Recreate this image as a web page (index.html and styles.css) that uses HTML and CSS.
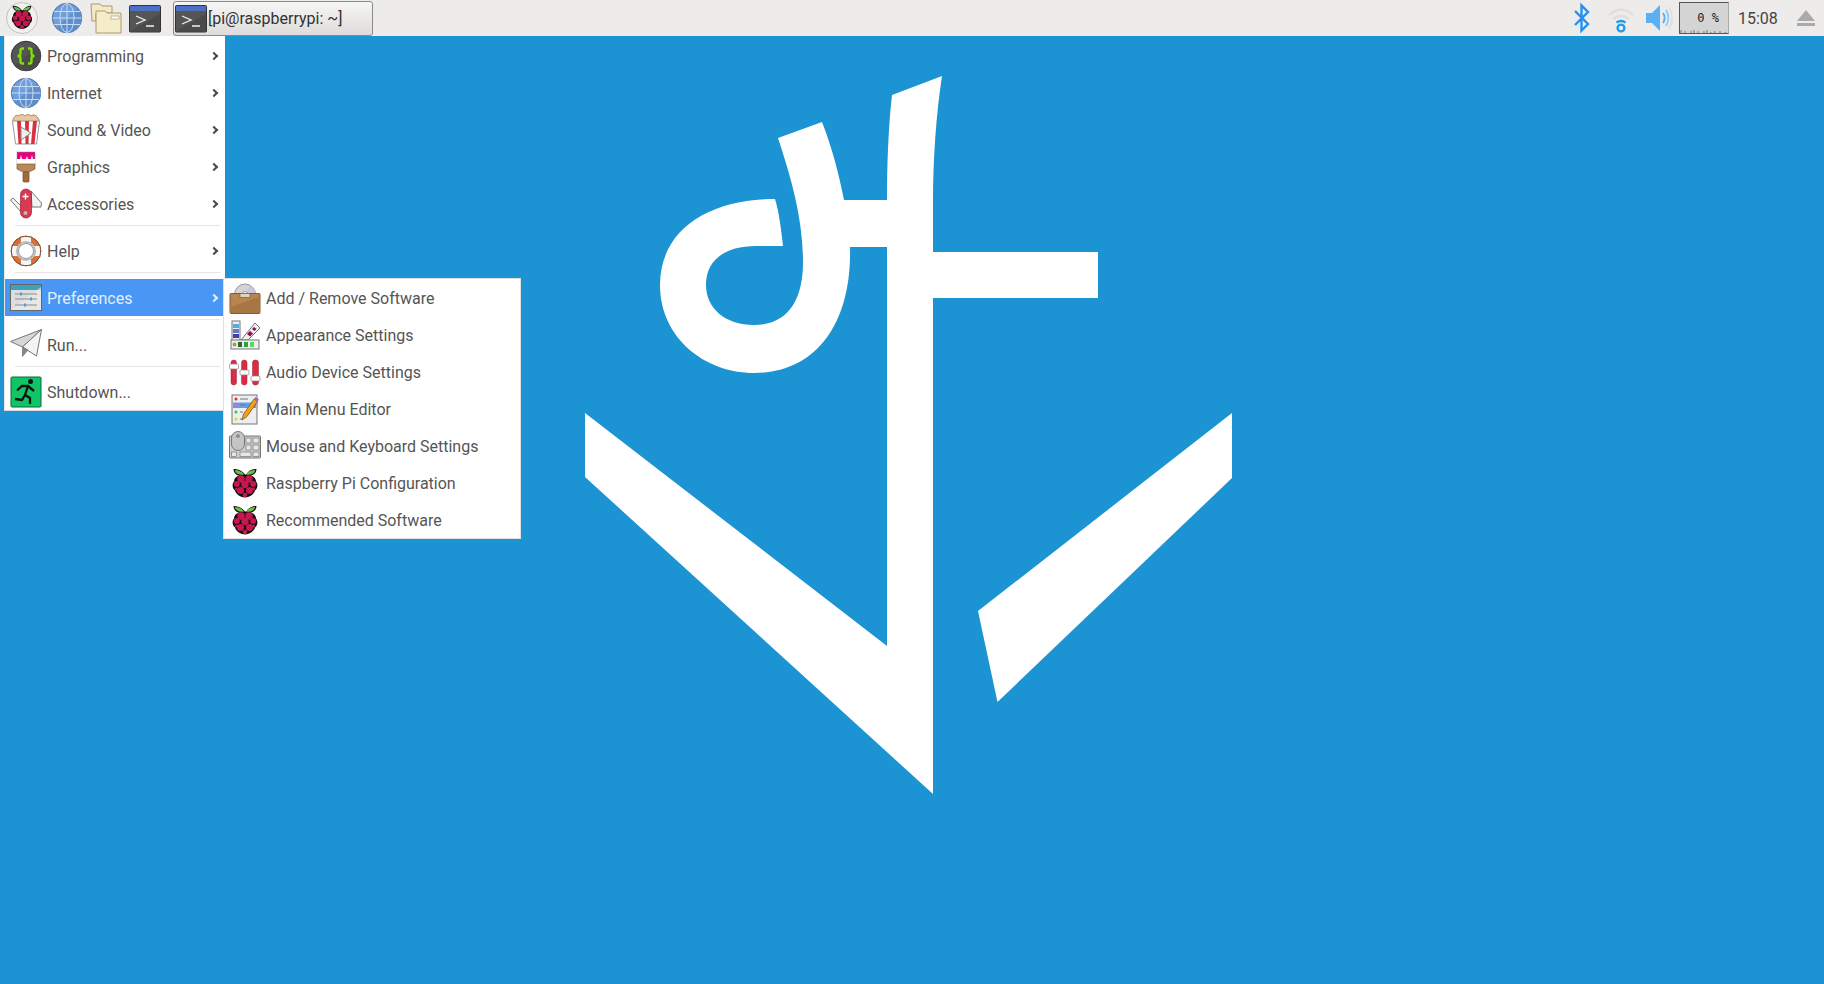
FILE: index.html
```html
<!DOCTYPE html>
<html lang="en">
    <head>
        <meta charset="UTF-8">
        <title>Raspberry Pi Desktop</title>
        <link rel="stylesheet" href="styles.css">
    </head>
    <body>

        <!-- shared icons -->
        <svg class="defs" width="0" height="0">
            <symbol id="berry" viewBox="0 0 32 32">
                <g transform="translate(0 -1.500)">
                    <path d="M16 8C13 4 9 2.500 4.500 2.500c0 3 2 6 5.500 6.500-3 1-5 3-5 6-2 2-2 7 1 9 1 4 6 7 10 7s9-3 10-7c3-2 3-7 1-9 0-3-2-5-5-6 3.500-.5 5.500-3.500 5.500-6.500-4.500 0-7.500 1.500-10.500 5.500z" fill="#111"/>
                    <path d="M15 8C13 5 9.500 3.500 5.800 3.500c.3 2.500 3 5.500 9.200 4.500zM17 8c2-3 5.500-4.500 9.200-4.500-.3 2.500-3 5.500-9.200 4.500z" fill="#6cc04a"/>
                    <g fill="#c7174d">
                        <circle cx="12" cy="12.500" r="3.700"/><circle cx="20" cy="12.500" r="3.700"/>
                        <circle cx="7.800" cy="17.500" r="3"/><circle cx="16" cy="18" r="3.700"/><circle cx="24.200" cy="17.500" r="3"/>
                        <circle cx="11.500" cy="24" r="3.500"/><circle cx="20.500" cy="24" r="3.500"/>
                        <circle cx="16" cy="28.500" r="2.300"/><circle cx="7.500" cy="22.500" r="1.500"/><circle cx="24.500" cy="22.500" r="1.500"/>
                    </g>
                </g>
            </symbol>
            <symbol id="globe" viewBox="0 0 32 32">
                <circle cx="16" cy="16" r="14.700" fill="#6f9fdc" stroke="#4f6f9c"/>
                <path d="M5 26 27 6a14.700 14.700 0 0 1-22 20z" fill="#5f8ecb"/>
                <g fill="none" stroke="#c8dcf4">
                    <ellipse cx="16" cy="16" rx="7" ry="14.500"/>
                    <path d="M16 1.500v29M3 9.500h26M1.500 16h29M3 22.500h26"/>
                </g>
            </symbol>
            <symbol id="terminal" viewBox="0 0 32 32">
                <rect x=".5" y="3.500" width="31" height="26.500" rx="1" fill="#555" stroke="#333"/>
                <rect x="1" y="4" width="30" height="5" fill="#4f6fc4"/>
                <path d="M1 29.500 31 12v17.500z" fill="#4a4a4a"/>
                <path d="m7 14 9 4-9 4M17 24h8" fill="none" stroke="#f2f2f2" stroke-width="1.300"/>
            </symbol>
        </svg>

        <!-- wallpaper -->
        <svg class="wallpaper" viewBox="0 0 1824 984">
            <path d="M942 76 892 95C888 130 887 170 887 200H844C838 170 832 148 822 122L778 138C792 180 803 220 803 262C803 300 788 325 754 325C725 325 706 308 706 285C706 260 725 246 756 246H783C781 228 779 212 775 199C710 199 660 229 660 285C660 338 705 373 754 373C815 373 852 325 850 247H887V646L585 413V477L933 794V298H1098V252H933V200C933 160 936 115 942 76Z" fill="#fff"/>
            <path d="M1232 413V478L997.500 702 978 611Z" fill="#fff"/>
        </svg>

        <!-- panel -->
        <header class="panel">
            <div class="launchers">
                <div class="start"><svg class="icon-start"><use href="#berry"/></svg></div>
                <svg class="launcher globe-launcher"><use href="#globe"/></svg>
                <svg class="launcher" viewBox="0 0 32 32">
                    <path d="M1 2h9l2 2h10v7H6v8H2z" fill="#f3e9c6" stroke="#a89a70"/>
                    <path d="M6 9h9l2 2h14v20H6z" fill="#f5ecc9" stroke="#a89a70"/>
                    <rect x="21" y="14" width="8" height="3" fill="#fff" stroke="#a89a70" stroke-width=".7"/>
                </svg>
                <svg class="launcher"><use href="#terminal"/></svg>
                <div class="task">
                    <svg class="launcher"><use href="#terminal"/></svg>
                    <span>[pi@raspberrypi: ~]</span>
                </div>
            </div>
            <div class="tray">
                <svg class="tray-icon" viewBox="0 0 28 32">
                    <path d="M6 9l13 13-6.500 6.500V3.500L19 10 6 23" fill="none" stroke="#2590f2" stroke-width="2.400"/>
                </svg>
                <svg class="tray-icon" viewBox="0 0 28 32">
                    <path d="M2 13c7-7 17-7 24 0M6 17c5-4 11-4 16 0" fill="none" stroke="#dedede" stroke-width="2.400"/>
                    <path d="M9.500 20.500c3-2 6-2 9 0" fill="none" stroke="#1e9bf0" stroke-width="2.400"/>
                    <circle cx="14" cy="26" r="3.400" fill="none" stroke="#1e9bf0" stroke-width="2.400"/>
                </svg>
                <svg class="tray-icon" viewBox="0 0 28 32">
                    <path d="M1 11h6l8-8v26l-8-8H1z" fill="#5cb0f2"/>
                    <path d="M18 11c2 3 2 7 0 10" fill="none" stroke="#5cb0f2" stroke-width="2"/>
                    <path d="M21 8c3 5 3 11 0 16" fill="none" stroke="#8cc4f0" stroke-width="1.600"/>
                    <path d="M24 5c4 7 4 15 0 22" fill="none" stroke="#dedede" stroke-width="1.600"/>
                </svg>
                <div class="cpu">
                    <span>0 %</span>
                    <svg class="cpu-graph" viewBox="0 0 48 4">
                        <path d="M1 4V1M5 4V2M11 4V2M14 4V1M18 4V2M24 4V2M27 4V1M31 4V3M35 4V2M40 4V2M45 4V3" stroke="#777"/>
                    </svg>
                </div>
                <span class="clock">15:08</span>
                <svg class="eject" viewBox="0 0 20 20">
                    <path d="M10 2 19 13H1z" fill="#aaa"/>
                    <rect x="1" y="15" width="18" height="3" fill="#aaa"/>
                </svg>
            </div>
        </header>

        <!-- main menu -->
        <nav class="menu">
            <a class="item">
                <svg class="icon" viewBox="0 0 32 32">
                    <circle cx="16" cy="16" r="14.800" fill="#555" stroke="#333"/>
                    <path d="M5 26 27 6a14.800 14.800 0 0 1-22 20z" fill="#4a4a4a"/>
                    <path d="M14 8.500h-1.500c-1.500 0-2 .5-2 2v3c0 1.500-1 2.500-3 2.500 2 0 3 1 3 2.500v3c0 1.500.5 2 2 2H14M18 8.500h1.500c1.500 0 2 .5 2 2v3c0 1.500 1 2.500 3 2.500-2 0-3 1-3 2.500v3c0 1.500-.5 2-2 2H18" fill="none" stroke="#80e000" stroke-width="2.400"/>
                </svg>
                <span>Programming</span><i class="arrow"></i>
            </a>
            <a class="item">
                <svg class="icon"><use href="#globe"/></svg>
                <span>Internet</span><i class="arrow"></i>
            </a>
            <a class="item">
                <svg class="icon" viewBox="0 0 32 32">
                    <path d="M3 6c1-4 4-6 6-4 2-2 4-2 6 0 2-2 4-2 6 0 2-2 6-1 8 4v4H3z" fill="#eac79c" stroke="#a9825a"/>
                    <path d="M2.500 7h27l-3 23h-21z" fill="#fff" stroke="#999"/>
                    <path d="M7 7h4l.5 23H8.500zM15 7h4l-.5 23h-3zM23 7h4l-2.500 23H21z" fill="#d9303e"/>
                    <path d="M11 13 21 19 11 26z" fill="#eee" stroke="#888"/>
                </svg>
                <span>Sound &amp; Video</span><i class="arrow"></i>
            </a>
            <a class="item">
                <svg class="icon" viewBox="0 0 32 32">
                    <rect x="7" y="1" width="18" height="12" fill="#e6007e" stroke="#888" stroke-width=".5"/>
                    <path d="M7 8h18v5H7zM11 4l1 4h-2zM17 5l1 3h-2zM22 4l1 4h-2z" fill="#fff"/>
                    <path d="M7 13h18v5l-6 3H13l-6-3z" fill="#b9885a" stroke="#7d5a3a" stroke-width=".7"/>
                    <rect x="13" y="21" width="6" height="10" rx="1" fill="#a06a3a" stroke="#6d4a2a" stroke-width=".7"/>
                </svg>
                <span>Graphics</span><i class="arrow"></i>
            </a>
            <a class="item">
                <svg class="icon" viewBox="0 0 32 32">
                    <path d="M.5 12 3 10 12 19 11 24zM21 3 31.500 15 31 19 22 19z" fill="#f2f2f2" stroke="#777"/>
                    <rect x="10.500" y="1" width="11" height="29" rx="5.500" fill="#d93a52" stroke="#9a2436" stroke-width=".7"/>
                    <path d="M15.500 5.500v6M12.500 8.500h6" stroke="#fff" stroke-width="1.400"/>
                    <circle cx="15.500" cy="25" r="2" fill="#bbb"/>
                </svg>
                <span>Accessories</span><i class="arrow"></i>
            </a>
            <hr>
            <a class="item">
                <svg class="icon" viewBox="0 0 32 32">
                    <circle cx="16" cy="16" r="14.800" fill="#d9703a" stroke="#8a5a3a"/>
                    <path d="M11 2h10v28H11zM2 11h28v10H2z" fill="#f6f6f6"/>
                    <circle cx="16" cy="16" r="14.800" fill="none" stroke="#8a5a3a"/>
                    <circle cx="16" cy="16" r="9" fill="none" stroke="#bbb" stroke-width="2"/>
                    <circle cx="16" cy="16" r="7.500" fill="#fff" stroke="#999"/>
                </svg>
                <span>Help</span><i class="arrow"></i>
            </a>
            <hr>
            <a class="item active">
                <svg class="icon" viewBox="0 0 32 32">
                    <rect x=".5" y="2.500" width="31" height="26" fill="#ddd" stroke="#666"/>
                    <rect x="1" y="3" width="30" height="5" fill="#3fa2bd"/>
                    <path d="M1 28 31 5v23z" fill="#eee" opacity=".6"/>
                    <path d="M5 12h22M5 17h22M5 23h22" stroke="#8a8a8a"/>
                    <path d="M10 10.500h2v3h-2zM20 15.500h2v3h-2zM14 21.500h2v3h-2z" fill="#3fa2d0"/>
                </svg>
                <span>Preferences</span><i class="arrow"></i>
            </a>
            <hr>
            <a class="item">
                <svg class="icon" viewBox="0 0 32 32">
                    <path d="M.5 12.500 31.500.5 12.500 18z" fill="#d6d6d6" stroke="#777"/>
                    <path d="M12.500 18 31.500.5 26.500 27z" fill="#f4f4f4" stroke="#777"/>
                    <path d="M12.500 18v9.500l5.500-6.500z" fill="#888" stroke="#666" stroke-width=".6"/>
                </svg>
                <span>Run...</span>
            </a>
            <hr>
            <a class="item">
                <svg class="icon" viewBox="0 0 32 32">
                    <rect x="1" y="1" width="30" height="30" rx="1" fill="#0fc566" stroke="#0c6a3c"/>
                    <circle cx="20.500" cy="5.500" r="2.500" fill="#111"/>
                    <path d="M7 14.500 12 10h6l6 5M18 10l-3 9 5 3v6M15 19l-3 5-7-1" fill="none" stroke="#111" stroke-width="2.300"/>
                </svg>
                <span>Shutdown...</span>
            </a>
        </nav>

        <!-- submenu preferences -->
        <nav class="submenu">
            <a class="item">
                <svg class="icon" viewBox="0 0 32 32">
                    <circle cx="16" cy="11.500" r="10.500" fill="#d4d4d4" stroke="#999"/>
                    <path d="M16 11.500 21 2.500a10.500 10.500 0 0 1 5 8z" fill="#c9c4e0"/>
                    <circle cx="16" cy="11.500" r="3" fill="#fff" stroke="#999"/>
                    <rect x="1" y="10.500" width="30" height="20" rx="1" fill="#b9854f" stroke="#7d5a3a"/>
                    <path d="M1 24 31 14v16H1z" fill="#a87642"/>
                    <rect x="11" y="10.500" width="10" height="4" fill="#e4d4bc" stroke="#7d5a3a" stroke-width=".7"/>
                </svg>
                <span>Add / Remove Software</span>
            </a>
            <a class="item">
                <svg class="icon" viewBox="0 0 32 32">
                    <rect x="3" y="1" width="8" height="20" fill="#eee" stroke="#777"/>
                    <path d="M4 4h6v4H4z" fill="#5ba8e0"/><path d="M4 9h6v4H4z" fill="#5a7fd0"/><path d="M4 14h6v4H4z" fill="#4a3fa0"/>
                    <path d="M12 20 26 3l5 5-12 12z" fill="#eee" stroke="#777"/>
                    <path d="M18 14l3-3 3 2.500-3 3z" fill="#8e1050"/><path d="M23 9l2-2 2.500 2-2 2z" fill="#8e1050"/>
                    <rect x="2" y="20" width="28" height="9" fill="#eee" stroke="#777"/>
                    <path d="M9 22h4v5H9z" fill="#256a2a"/><path d="M15 22h4v5h-4z" fill="#2fa03a"/><path d="M21 22h4v5h-4z" fill="#4fe05a"/>
                    <circle cx="5.500" cy="24.500" r="1.500" fill="#d89a20" stroke="#555" stroke-width=".5"/>
                </svg>
                <span>Appearance Settings</span>
            </a>
            <a class="item">
                <svg class="icon" viewBox="0 0 32 32">
                    <g fill="#d92c46" stroke="#a02034" stroke-width=".5">
                        <rect x="2" y="3" width="5.500" height="25" rx="2.700"/>
                        <rect x="12.500" y="3" width="5.500" height="25" rx="2.700"/>
                        <rect x="23.500" y="3" width="6" height="25" rx="2.700"/>
                    </g>
                    <g fill="#fff" stroke="#888" stroke-width=".7">
                        <rect x=".5" y="7" width="9" height="5" rx="1"/>
                        <rect x="11" y="13" width="9" height="5" rx="1"/>
                        <rect x="22" y="19" width="9" height="5" rx="1"/>
                    </g>
                </svg>
                <span>Audio Device Settings</span>
            </a>
            <a class="item">
                <svg class="icon" viewBox="0 0 32 32">
                    <rect x="3" y="1" width="25" height="29" fill="#eee" stroke="#777"/>
                    <rect x="4" y="8.500" width="23" height="5.500" fill="#5aa2ef"/>
                    <circle cx="7" cy="5" r="1.500" fill="#e03030"/><rect x="5.500" y="9.500" width="3" height="3" fill="#e060d0"/>
                    <circle cx="7" cy="18" r="1.500" fill="#30d030"/><circle cx="7" cy="25" r="1.500" fill="#d0e020"/>
                    <path d="M11 5h8M11 11h6M11 18h3M11 25h2" stroke="#777"/>
                    <path d="M13 26 14.500 20 25 5l3.500 2.500L18 22.500z" fill="#f0a020" stroke="#6a4a10" stroke-width=".7"/>
                    <path d="M25 5l1.500-2 3.500 2.500-1.500 2z" fill="#b060c0"/>
                </svg>
                <span>Main Menu Editor</span>
            </a>
            <a class="item">
                <svg class="icon" viewBox="0 0 32 32">
                    <rect x=".5" y="5" width="31" height="22" rx="1" fill="#cfcfcf" stroke="#777"/>
                    <g fill="#e6e6e6" stroke="#777" stroke-width=".7">
                        <rect x="17" y="7" width="5" height="5"/><rect x="24" y="7" width="6" height="5"/>
                        <rect x="17" y="14" width="5" height="5"/><rect x="24" y="14" width="6" height="5"/>
                        <rect x="2.500" y="21" width="5" height="4.500"/><rect x="11" y="21" width="11" height="4.500"/><rect x="24" y="21" width="6" height="4.500"/>
                    </g>
                    <rect x="2.500" y=".5" width="13" height="19" rx="6.500" fill="#c4c4c4" stroke="#777"/>
                    <circle cx="9" cy="5" r="1.500" fill="#999" stroke="#666" stroke-width=".5"/>
                </svg>
                <span>Mouse and Keyboard Settings</span>
            </a>
            <a class="item">
                <svg class="icon"><use href="#berry"/></svg>
                <span>Raspberry Pi Configuration</span>
            </a>
            <a class="item">
                <svg class="icon"><use href="#berry"/></svg>
                <span>Recommended Software</span>
            </a>
        </nav>

    </body>
</html>
```

FILE: styles.css
```css
body {
    margin: 0;
    height: 984px;
    overflow: hidden;
    position: relative;
    background-color: #1c93d3;
    font-family: 'Roboto', sans-serif;
    font-size: 16px;
    color: #555;
}

.defs {
    position: absolute;
}

.wallpaper {
    position: absolute;
    top: 0;
    left: 0;
    width: 1824px;
    height: 984px;
}

/* panel */
.panel {
    position: relative;
    height: 36px;
    background-color: #edecea;
    display: flex;
    justify-content: space-between;
    align-items: center;
}

.launchers {
    display: flex;
    align-items: center;
    padding-left: 6px;
}

.start {
    width: 30px;
    height: 30px;
    display: flex;
    align-items: center;
    justify-content: center;
    border: 1px solid #c4c4c4;
    border-radius: 50%;
    background-color: #f1f0ee;
}

.icon-start {
    width: 26px;
    height: 26px;
}

.launcher {
    width: 32px;
    height: 32px;
    flex-shrink: 0;
}

.launchers .launcher {
    margin-left: 7px;
}

.launchers .globe-launcher {
    margin-left: 13px;
}

.task {
    width: 200px;
    height: 35px;
    margin-left: 12px;
    box-sizing: border-box;
    display: flex;
    align-items: center;
    border: 1px solid #8a8a8a;
    border-radius: 3px;
    background: linear-gradient(#f6f6f5, #dddcda);
    color: #333;
}

.task .launcher {
    margin-left: 1px;
}

.task span {
    margin-left: 1px;
}

.tray {
    display: flex;
    align-items: center;
}

.tray-icon {
    width: 28px;
    height: 32px;
    margin-right: 10px;
}

.cpu {
    width: 50px;
    height: 32px;
    margin-left: -4px;
    box-sizing: border-box;
    position: relative;
    border: 1px solid #555;
    border-right-color: #aaa;
    background-color: #d4d4d4;
    font-family: 'DejaVu Sans Mono', monospace;
    font-size: 12px;
    color: #222;
    text-align: right;
    line-height: 30px;
    padding-right: 9px;
}

.cpu-graph {
    position: absolute;
    left: 0;
    bottom: 0;
    width: 48px;
    height: 4px;
}

.clock {
    margin-left: 9px;
    width: 38px;
    color: #444;
}

.eject {
    width: 20px;
    height: 20px;
    margin: 0 8px 0 20px;
}

/* menu */
.menu,
.submenu {
    position: absolute;
    background-color: #fff;
    box-sizing: border-box;
}

.menu {
    top: 36px;
    left: 4px;
    width: 221px;
    padding-top: 1px;
    height: 375px;
    border-left: 1px solid #e6e6e6;
    border-bottom: 1px solid #d8d8d8;
}

.submenu {
    top: 278px;
    left: 223px;
    width: 298px;
    height: 261px;
    padding-top: 1px;
    border: 1px solid #e0e0e0;
}

.item {
    height: 37px;
    display: flex;
    align-items: center;
    padding: 0 6px 0 5px;
}

.menu .item span {
    padding-top: 2px;
}

.item.active {
    background-color: #4a96f4;
    color: #e4eefc;
    margin-right: 2px;
    padding-right: 4px;
}

.icon {
    width: 32px;
    height: 32px;
    margin-right: 5px;
    flex-shrink: 0;
}

.item span {
    flex-grow: 1;
}

.arrow {
    width: 4px;
    height: 4px;
    margin-right: 2px;
    border-top: 2px solid #4a4a4a;
    border-right: 2px solid #4a4a4a;
    transform: rotate(45deg);
}

.item.active .arrow {
    border-color: #e4eefc;
}

hr {
    border: none;
    height: 1px;
    margin: 3px 5px 6px 10px;
    background-color: #e6e6e6;
}
```
